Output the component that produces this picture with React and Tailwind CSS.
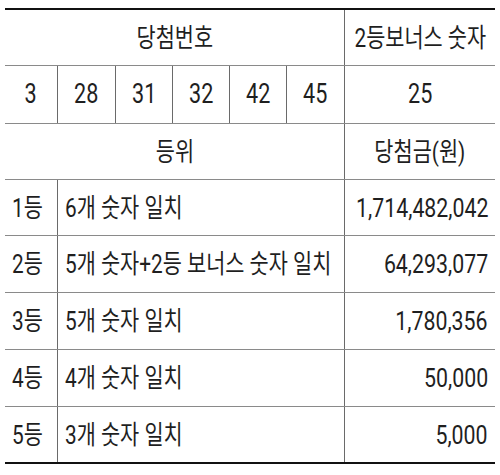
import React from 'react';

const numbers = ['3', '28', '31', '32', '42', '45'];
const numberWidths = ['w-[53px]', 'w-[58px]', 'w-[57px]', 'w-[57px]', 'w-[57px]', 'w-[58px]'];

const prizes = [
    { rank: '1등', rule: '6개 숫자 일치', amount: '1,714,482,042', h: 'h-[56px]' },
    { rank: '2등', rule: '5개 숫자+2등 보너스 숫자 일치', amount: '64,293,077', h: 'h-[57px]' },
    { rank: '3등', rule: '5개 숫자 일치', amount: '1,780,356', h: 'h-[57px]' },
    { rank: '4등', rule: '4개 숫자 일치', amount: '50,000', h: 'h-[57px]' },
    { rank: '5등', rule: '3개 숫자 일치', amount: '5,000', h: 'h-[55px]' },
];

// the print font is narrow, so every label is squeezed horizontally
const Narrow = ({ children, origin = 'origin-center', scale = 'scale-x-[0.8]' }) => (
    <span className={`inline-block whitespace-nowrap ${scale} ${origin}`}>{children}</span>
);

const App = () => {
    return (
        <div className="w-[500px] h-[475px] bg-white pt-[8px] pl-[5px]">
            <div className="w-[490px] border-t-2 border-b-2 border-[#111] text-[26px] leading-none text-[#1f1f1f] font-['Roboto','Noto_Sans_CJK_KR',sans-serif]">
                <div className="flex h-[56px] border-b border-[#8a8a8a]">
                    <div className="w-[340px] shrink-0 border-r border-[#6a6a6a] flex items-center justify-center">
                        <Narrow>당첨번호</Narrow>
                    </div>
                    <div className="w-[150px] shrink-0 flex items-center justify-center">
                        <Narrow>2등보너스 숫자</Narrow>
                    </div>
                </div>

                <div className="flex h-[58px] border-b border-[#8a8a8a] text-[27px]">
                    {numbers.map((n, i) => (
                        <div key={n} className={`${numberWidths[i]} shrink-0 border-r border-[#6a6a6a] flex items-center justify-center`}>
                            <Narrow>{n}</Narrow>
                        </div>
                    ))}
                    <div className="w-[150px] shrink-0 flex items-center justify-center">
                        <Narrow>25</Narrow>
                    </div>
                </div>

                <div className="flex h-[56px] border-b border-[#8a8a8a]">
                    <div className="w-[340px] shrink-0 border-r border-[#6a6a6a] flex items-center justify-center">
                        <Narrow>등위</Narrow>
                    </div>
                    <div className="w-[150px] shrink-0 flex items-center justify-center">
                        <Narrow>당첨금(원)</Narrow>
                    </div>
                </div>

                {prizes.map((p, i) => (
                    <div
                        key={p.rank}
                        className={`flex ${p.h} ${i < prizes.length - 1 ? 'border-b border-[#8a8a8a]' : ''}`}
                    >
                        <div className="w-[53px] shrink-0 min-w-0 border-r border-[#6a6a6a] flex items-center pl-[7px]">
                            <Narrow origin="origin-left">{p.rank}</Narrow>
                        </div>
                        <div className="w-[287px] shrink-0 min-w-0 border-r border-[#6a6a6a] flex items-center pl-[7px]">
                            <Narrow origin="origin-left">{p.rule}</Narrow>
                        </div>
                        <div className="w-[150px] shrink-0 min-w-0 flex items-center justify-end pr-[7px]">
                            <Narrow origin="origin-right" scale="scale-x-[0.82]">{p.amount}</Narrow>
                        </div>
                    </div>
                ))}
            </div>
        </div>
    );
};

export default App;
